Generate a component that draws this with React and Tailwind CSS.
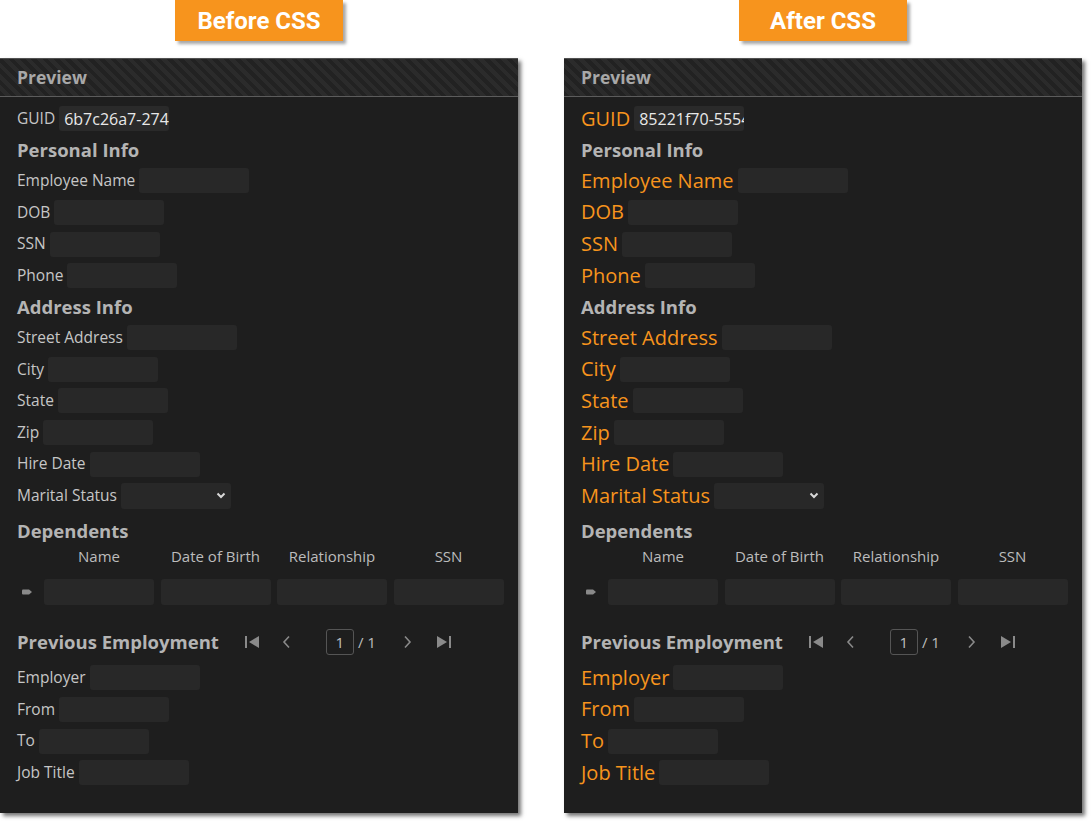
const personal = ["Employee Name", "DOB", "SSN", "Phone"];
const address = ["Street Address", "City", "State", "Zip", "Hire Date"];
const employment = ["Employer", "From", "To", "Job Title"];
const depCols = ["Name", "Date of Birth", "Relationship", "SSN"];

function Field({ label, styled, children }) {
  return (
    <div className="h-[31.6px] flex items-center">
      <span
        className={
          styled
            ? "text-[20px] text-[#f7941d] leading-none"
            : "text-[15.5px] text-[#c6c6c6] leading-none"
        }
      >
        {label}
      </span>
      <div className="ml-[4px]">
        {children || <div className="w-[110px] h-[25px] rounded-[3px] bg-[#282828]" />}
      </div>
    </div>
  );
}

function Heading({ children, className = "" }) {
  return (
    <div className={"h-[30.5px] flex items-center text-[18.5px] font-bold text-[#b4b4b4] " + className}>
      {children}
    </div>
  );
}

function Panel({ styled, guid }) {
  return (
    <div className="w-[518px] h-[755px] bg-[#1e1e1e] border-t border-[#505050] shadow-[3px_3px_4px_rgba(0,0,0,0.55)]">
      {/* header */}
      <div className="h-[38px] flex items-center px-[17px] border-b border-[#5c5c5c] bg-[repeating-linear-gradient(45deg,#222222_0px,#222222_4px,#2b2b2b_4px,#2b2b2b_8px)]">
        <span className="text-[17.5px] font-bold text-[#a8a8a8]">Preview</span>
      </div>

      <div className="pl-[17px] pt-[6px]">
        <Field label="GUID" styled={styled}>
          <div className="w-[110px] h-[25px] rounded-[3px] bg-[#2a2a2a] overflow-hidden whitespace-nowrap pl-[5px] flex items-center text-[16px] text-[#e8e8e8]">
            {guid}
          </div>
        </Field>

        <Heading>Personal Info</Heading>
        {personal.map((l) => (
          <Field key={l} label={l} styled={styled} />
        ))}

        <Heading>Address Info</Heading>
        {address.map((l) => (
          <Field key={l} label={l} styled={styled} />
        ))}
        <Field label="Marital Status" styled={styled}>
          <div className="w-[110px] h-[26px] rounded-[3px] bg-[#282828] flex items-center justify-end pr-[5px]">
            <svg width="10" height="7" viewBox="0 0 10 7">
              <path d="M1.5 1.5 L5 5 L8.5 1.5" stroke="#d8d8d8" strokeWidth="2" fill="none" />
            </svg>
          </div>
        </Field>

        <Heading className="mt-[4px]">Dependents</Heading>
        <div className="h-[21px] flex items-center pl-[27px] gap-[6.5px]">
          {depCols.map((c) => (
            <div key={c} className="w-[110px] text-center text-[15px] text-[#bcbcbc]">
              {c}
            </div>
          ))}
        </div>
        <div className="mt-[12px] h-[26px] flex items-center">
          <svg width="27" height="8" viewBox="0 0 27 8">
            <path d="M6 1.5 Q5 1.5 5 2.5 L5 5.5 Q5 6.5 6 6.5 L12 6.5 L15 4 L12 1.5 Z" fill="#8a8a8a" />
          </svg>
          <div className="flex gap-[6.5px]">
            {depCols.map((c) => (
              <div key={c} className="w-[110px] h-[26px] rounded-[3px] bg-[#282828]" />
            ))}
          </div>
        </div>

        <div className="mt-[21px] h-[32px] flex items-center">
          <span className="text-[18.5px] font-bold text-[#b4b4b4]">Previous Employment</span>
          <div className="ml-[25px] flex items-center text-[#8a8a8a]">
            <svg width="16" height="14" viewBox="0 0 16 14">
              <rect x="1" y="1" width="2" height="12" fill="#8a8a8a" />
              <path d="M15 1 L15 13 L5 7 Z" fill="#8a8a8a" />
            </svg>
            <svg className="ml-[21px]" width="10" height="14" viewBox="0 0 10 14">
              <path d="M8 1.5 L3 7 L8 12.5" stroke="#8a8a8a" strokeWidth="1.6" fill="none" />
            </svg>
            <div className="ml-[35px] w-[28px] h-[26px] rounded-[3px] border border-[#555] flex items-center justify-center text-[15px] text-[#c0c0c0]">
              1
            </div>
            <span className="ml-[4px] text-[15px] text-[#bcbcbc]">/ 1</span>
            <svg className="ml-[27px]" width="10" height="14" viewBox="0 0 10 14">
              <path d="M2 1.5 L7 7 L2 12.5" stroke="#8a8a8a" strokeWidth="1.6" fill="none" />
            </svg>
            <svg className="ml-[23px]" width="16" height="14" viewBox="0 0 16 14">
              <path d="M1 1 L1 13 L11 7 Z" fill="#8a8a8a" />
              <rect x="13" y="1" width="2" height="12" fill="#8a8a8a" />
            </svg>
          </div>
        </div>

        <div className="mt-[4px]">
          {employment.map((l) => (
            <Field key={l} label={l} styled={styled} />
          ))}
        </div>
      </div>
    </div>
  );
}

function Badge({ children }) {
  return (
    <div className="w-[168px] h-[41px] bg-[#f7941d] flex items-center justify-center text-white text-[24px] font-bold shadow-[3px_3px_3px_rgba(0,0,0,0.35)] font-['Roboto',sans-serif]">
      {children}
    </div>
  );
}

export default function App() {
  return (
    <div className="w-[1092px] h-[821px] bg-white flex gap-[46px] font-['Open_Sans',sans-serif]">
      <div className="w-[518px] flex flex-col items-center">
        <Badge>Before CSS</Badge>
        <div className="mt-[17px]">
          <Panel guid="6b7c26a7-274" />
        </div>
      </div>
      <div className="w-[518px] flex flex-col items-center">
        <Badge>After CSS</Badge>
        <div className="mt-[17px]">
          <Panel styled guid="85221f70-5554" />
        </div>
      </div>
    </div>
  );
}
